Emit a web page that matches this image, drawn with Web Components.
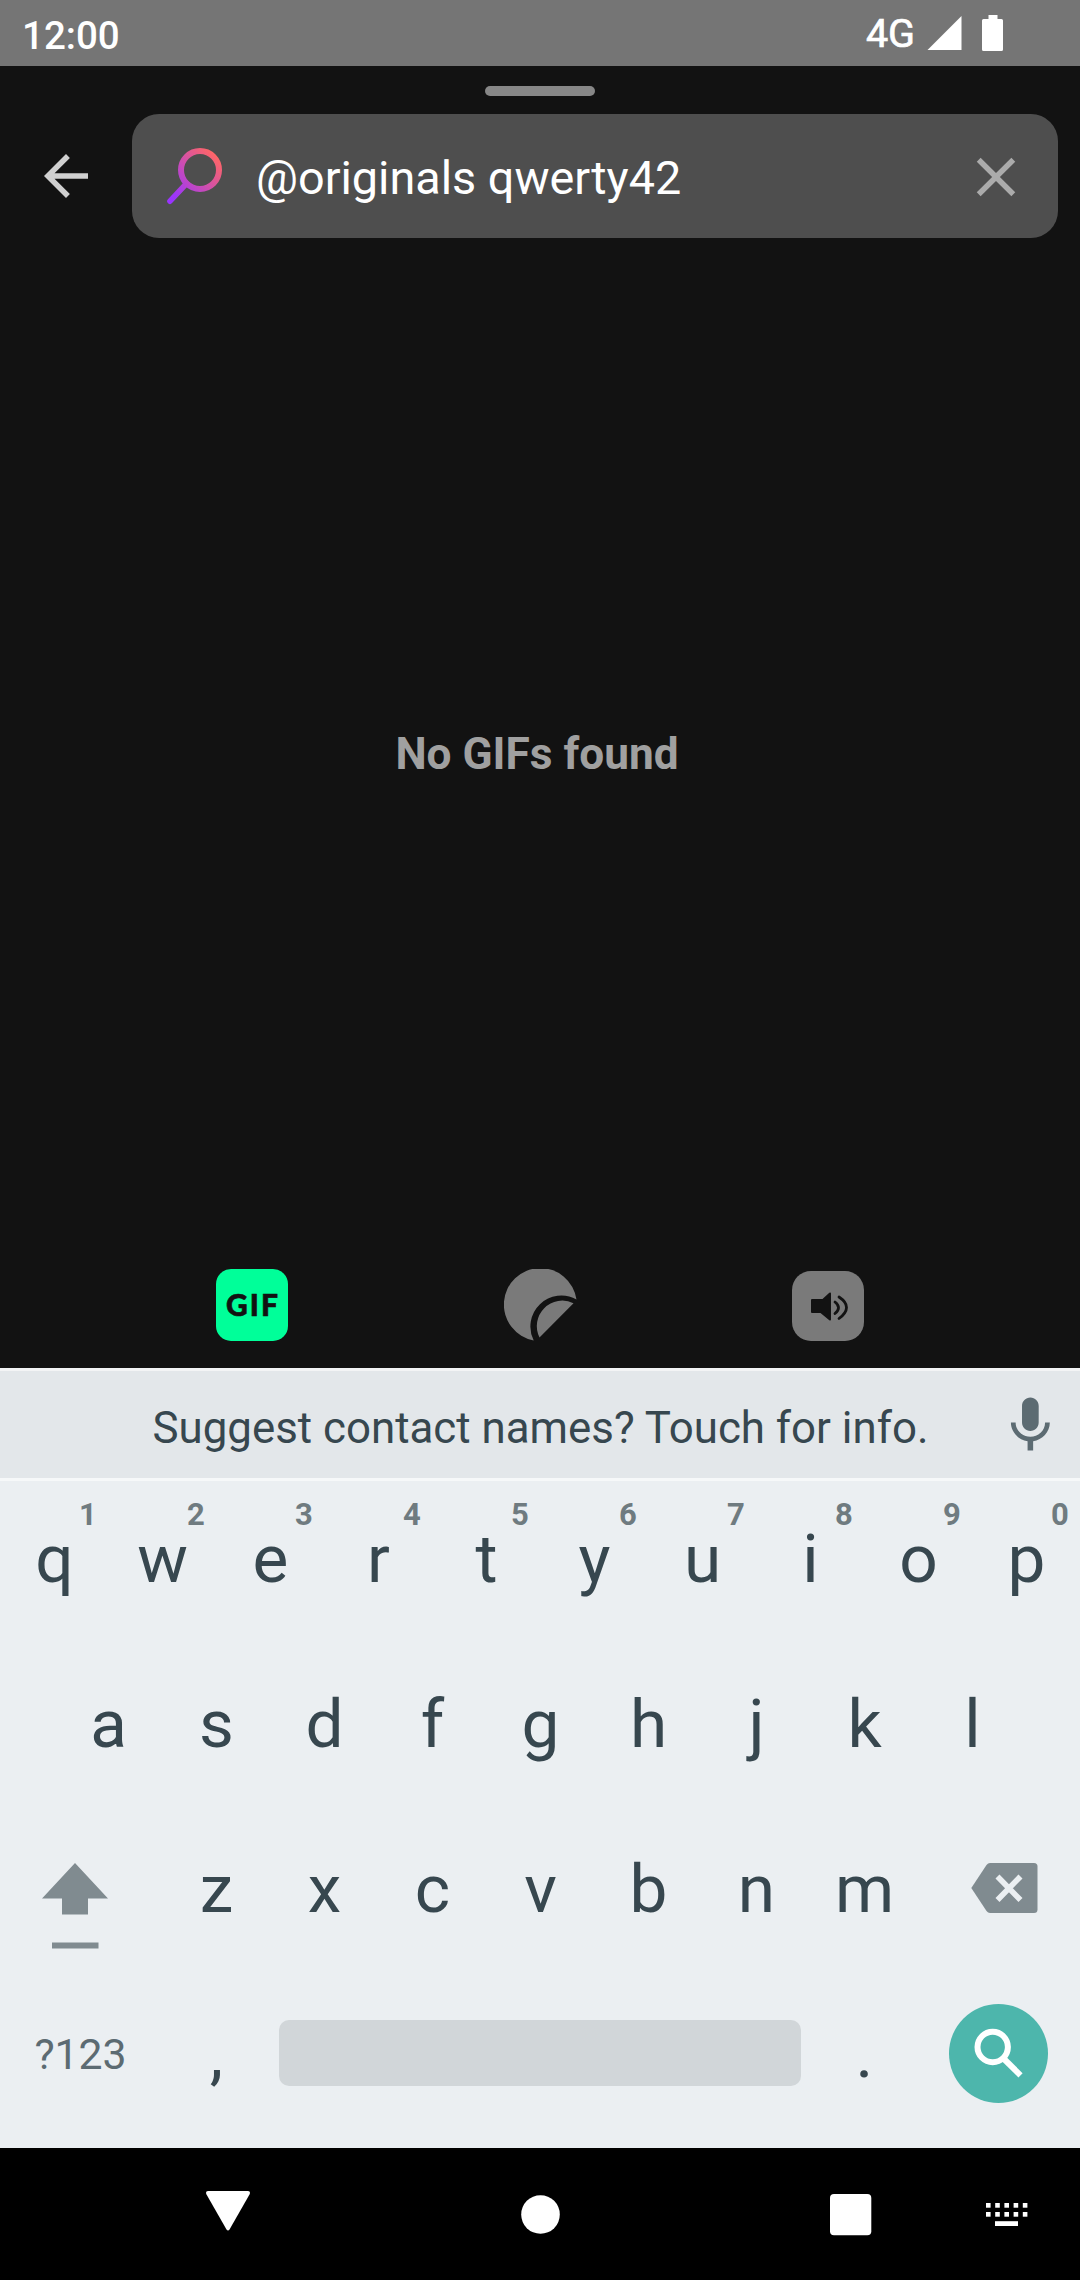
<!DOCTYPE html>
<html lang="en">
<head>
<meta charset="utf-8">
<title>GIF search</title>
<style>
html, body { margin: 0; padding: 0; background: #000; }
body { width: 1080px; height: 2280px; overflow: hidden; font-family: Roboto, "Noto Sans", sans-serif; }
</style>
</head>
<body>
<phone-screen>
  <status-bar slot="status" network="4G">12:00</status-bar>
  <search-header slot="header">@originals qwerty42</search-header>
  <empty-state slot="content">No GIFs found</empty-state>
  <media-tabs slot="tabs"></media-tabs>
  <soft-keyboard slot="keyboard">
    <suggestion-strip slot="strip">Suggest contact names? Touch for info.</suggestion-strip>
  </soft-keyboard>
  <nav-bar slot="nav"></nav-bar>
</phone-screen>
<script>
const define = (name, html) => {
  const template = document.createElement('template');
  template.innerHTML = html;
  customElements.define(name, class extends HTMLElement {
    constructor() {
      super();
      this.attachShadow({ mode: 'open' }).append(template.content.cloneNode(true));
    }
    connectedCallback() {
      this.shadowRoot.querySelectorAll('[data-attr]').forEach(el => {
        el.textContent = this.getAttribute(el.dataset.attr) || '';
      });
    }
  });
};

/* Icon drawings: [width, height, markup] */
const ICONS = {
  signal: [35, 35, '<path d="M34.5 0V34H.5z" fill="#fff"/>'],
  battery: [21, 36, '<path d="M6.5 0h9v4H19.500q1.500 0 1.500 1.500V34.500q0 1.500-1.500 1.500H1.500Q0 36 0 34.500V5.500Q0 4 1.500 4h5z" fill="#fff"/>'],
  back: [66, 66, '<path transform="scale(2.75)" d="M20 11H7.830l5.590-5.590L12 4l-8 8 8 8 1.410-1.410L7.830 13H20z" fill="#d0d0d0"/>'],
  lens: [56, 57, '<defs><linearGradient id="g" gradientUnits="userSpaceOnUse" x1="3" y1="53" x2="50" y2="8"><stop offset="0" stop-color="#9933ff"/><stop offset=".12" stop-color="#9d36f8"/><stop offset="1" stop-color="#ff6666"/></linearGradient></defs><g fill="none" stroke="url(#g)"><circle cx="33" cy="22" r="19" stroke-width="6"/><path d="M3 53.200L19.500 35.500" stroke-width="5.600" stroke-linecap="round"/></g>'],
  close: [66, 66, '<path transform="scale(2.75)" d="M19 6.410L17.590 5 12 10.590 6.410 5 5 6.410 10.590 12 5 17.590 6.410 19 12 13.410 17.590 19 19 17.590 13.410 12z" fill="#ababab"/>'],
  sticker: [73, 73, '<g fill="#7a7a7a"><path d="M29.700 71.500A36.500 36.500 0 1 1 72.500 30.500A31 31 0 0 0 29.700 71.500z"/><path d="M69.500 34.200A25.500 25.500 0 0 0 35.500 68.500z"/></g>'],
  sound: [72, 70, '<rect width="72" height="70" rx="19" fill="#7a7a7a"/><path d="M20 28h10.500l6.800-6.300q1.700-.8 1.700.8v26q0 1.600-1.700.8L28.500 42H20q-1 0-1-1V29q0-1 1-1z" fill="#121212"/><g fill="none" stroke="#121212" stroke-width="2.800" stroke-linecap="round"><path d="M43 31q7 5.500 0 11.500"/><path d="M47 26q15 10 0 21.500"/></g>'],
  mic: [67, 67, '<path transform="scale(2.78)" d="M12 14c1.660 0 2.990-1.340 2.990-3L15 5c0-1.660-1.340-3-3-3S9 3.340 9 5v6c0 1.660 1.340 3 3 3zm5.300-3c0 3-2.540 5.100-5.300 5.100S6.700 14 6.700 11H5c0 3.410 2.720 6.230 6 6.720V21h2v-3.280c3.280-.48 6-3.300 6-6.720h-1.700z" fill="#5c6b72"/>'],
  shift: [66, 86, '<g fill="#808b90"><path d="M33 0l33 35.500H46V51.500H20V35.500H0z"/><rect x="10" y="79.500" width="46.500" height="6"/></g>'],
  backspace: [67, 50, '<path d="M.3 25L15.500 2Q17 0 19 0H63q3.500 0 3.500 3.500V46.500Q66.500 50 63 50H19q-2 0-3.500-2z" fill="#808b90"/><path d="M26.500 13.500l23 23.500M49.500 13.500l-23 23.500" stroke="#ebeff2" stroke-width="5.600"/>'],
  search: [99, 99, '<ellipse cx="49.500" cy="49.500" rx="49.500" ry="49.500" fill="#4db6ac"/><g fill="none" stroke="#fff" stroke-width="6"><circle cx="43.700" cy="43" r="15.200"/><path d="M54 54L71.500 71.300"/></g>'],
  down: [44, 40, '<path d="M2 0H42Q45 0 43.500 3.500L23.500 38.500Q22 40.500 20.500 38.500L.5 3.500Q-1 0 2 0z" fill="#fff"/>'],
  home: [39, 39, '<circle cx="19.500" cy="19.500" r="19.300" fill="#fff"/>'],
  recents: [42, 42, '<rect width="41.300" height="41.300" rx="4" fill="#fff"/>'],
  ime: [42, 24, '<g fill="#fff">' + [0, 9].map(y => [0, 9.2, 18.4, 27.6, 36.8].map(x => `<rect x="${x}" y="${y}" width="4.600" height="4.700"/>`).join('')).join('') + '<rect x="9" y="18.200" width="23" height="4.800"/></g>'],
};
customElements.define('app-icon', class extends HTMLElement {
  connectedCallback() {
    const [w, h, body] = ICONS[this.getAttribute('name')];
    this.attachShadow({ mode: 'open' }).innerHTML =
      `<style>:host{display:block;flex:none}svg{display:block}</style><svg width="${w}" height="${h}" viewBox="0 0 ${w} ${h}">${body}</svg>`;
  }
});

define('status-bar', `<style>
  :host { display: flex; box-sizing: border-box; height: 66px; padding: 0 77px 0 22px; background: #757575; color: #fff; font-weight: 500; font-size: 38.500px; }
  .time { flex: 1; line-height: 71px; }
  .net { line-height: 67px; font-size: 39.500px; font-weight: 400; -webkit-text-stroke: .7px #fff; margin-right: 12px; }
  .signal { margin: 16px 20px 0 0; }
  .battery { margin-top: 15px; }
</style><span class="time"><slot></slot></span><span class="net" data-attr="network"></span><app-icon class="signal" name="signal"></app-icon><app-icon class="battery" name="battery"></app-icon>`);

define('search-header', `<style>
  :host { display: block; height: 172px; }
  .grip { width: 110px; height: 10px; border-radius: 5px; background: #878787; margin: 0 auto; }
  .wrap { padding-top: 20px; }
  .row { display: flex; align-items: center; padding: 18px 22px 0 33px; }
  .field { flex: 1; display: flex; height: 124px; margin-left: 33px; border-radius: 27px; background: #4e4e4e; color: #fff; }
  .lens { margin: 34px 0 0 35px; }
  .query { flex: 1; margin-left: 33px; font-size: 46.750px; line-height: 128px; white-space: nowrap; }
  .close { margin: 29.500px 29px 0 0; }
</style><div class="wrap"><div class="grip"></div></div>
<div class="row"><app-icon name="back"></app-icon><div class="field"><app-icon class="lens" name="lens"></app-icon><span class="query"><slot></slot></span><app-icon class="close" name="close"></app-icon></div></div>`);

define('empty-state', `<style>
  :host { display: block; flex: 1; padding: 490px 6px 0 0; text-align: center; font-size: 44.200px; line-height: 52px; font-weight: 700; color: #a0a0a0; }
</style><slot></slot>`);

define('media-tabs', `<style>
  :host { display: flex; height: 99px; padding: 0 108px; }
  .tab { flex: 1; display: flex; justify-content: center; align-items: flex-start; }
  .gif { box-sizing: border-box; width: 72px; height: 72px; padding-left: 2px; border-radius: 15px; background: #00ff99; color: #121212; font: 900 30px/71px Lato, sans-serif; letter-spacing: 2px; -webkit-text-stroke: .6px #121212; text-align: center; }
  .sound { margin-top: 2px; }
</style><div class="tab"><div class="gif">GIF</div></div><div class="tab"><app-icon name="sticker"></app-icon></div><div class="tab"><app-icon class="sound" name="sound"></app-icon></div>`);

define('suggestion-strip', `<style>
  :host { display: grid; grid-template-columns: 100px 1fr 100px; height: 107px; background: #e3e7ea; border-top: 3px solid #f3f4f5; border-bottom: 3px solid #f6f8f9; color: #37474f; }
  .text { text-align: center; padding-left: 1px; font-size: 43.850px; line-height: 114px; height: 107px; white-space: nowrap; }
  app-icon { margin: 20.500px 0 0 17px; }
</style><span></span><span class="text"><slot></slot></span><app-icon name="mic"></app-icon>`);

define('kb-key', `<style>
  :host { display: block; box-sizing: border-box; position: relative; width: 108px; height: 165px; padding-left: 1px; text-align: center; font-size: 67.500px; line-height: 156px; color: #37474f; }
  .hint { position: absolute; top: 0; right: 0; width: 40px; font-size: 31px; line-height: 67px; font-weight: 700; color: #6f7b80; }
</style><slot></slot><span class="hint" data-attr="hint"></span>`);

define('key-row', `<style>
  :host { display: flex; justify-content: center; height: 165px; }
</style><slot></slot>`);

const keys = (letters, hints = '') => [...letters].map((c, i) =>
  `<kb-key${hints[i] ? ` hint="${hints[i]}"` : ''}>${c}</kb-key>`).join('');

define('soft-keyboard', `<style>
  :host { display: block; height: 780px; background: #ebeff2; }
  .edge { width: 162px; }
  .shift { margin: 51.500px 0 0 42px; }
  .back { margin: 52px 0 0 53px; }
  .symbols { width: 161px; text-align: center; font-size: 42.700px; line-height: 157px; color: #5c6b72; }
  .comma { margin-left: 1px; }
  .space { width: 522px; height: 66px; margin: 44px 9px 0 9px; border-radius: 10px; background: #d1d6d9; }
  .go { width: 162px; }
  .go app-icon { margin: 28px 0 0 31px; }
</style><slot name="strip"></slot>
<key-row>${keys('qwertyuiop', '1234567890')}</key-row>
<key-row>${keys('asdfghjkl')}</key-row>
<key-row><div class="edge"><app-icon class="shift" name="shift"></app-icon></div>${keys('zxcvbnm')}<div class="edge"><app-icon class="back" name="backspace"></app-icon></div></key-row>
<key-row><div class="symbols">?123</div><kb-key class="comma">,</kb-key><div class="space"></div><kb-key>.</kb-key><div class="go"><app-icon name="search"></app-icon></div></key-row>`);

define('nav-bar', `<style>
  :host { display: flex; box-sizing: border-box; height: 132px; padding: 0 52px 0 206px; background: #000; justify-content: space-between; }
  .down { margin-top: 43px; }
  .home { margin: 47px 0 0; }
  .right { display: flex; gap: 114px; }
  .recents { margin-top: 46px; }
  .ime { margin-top: 55px; }
  .left { display: flex; gap: 271px; }
</style><div class="left"><app-icon class="down" name="down"></app-icon><app-icon class="home" name="home"></app-icon></div>
<div class="right"><app-icon class="recents" name="recents"></app-icon><app-icon class="ime" name="ime"></app-icon></div>`);

define('phone-screen', `<style>
  :host { display: flex; flex-direction: column; width: 1080px; height: 2280px; background: #121212; }
</style><slot name="status"></slot><slot name="header"></slot><slot name="content"></slot><slot name="tabs"></slot><slot name="keyboard"></slot><slot name="nav"></slot>`);
</script>
</body>
</html>
